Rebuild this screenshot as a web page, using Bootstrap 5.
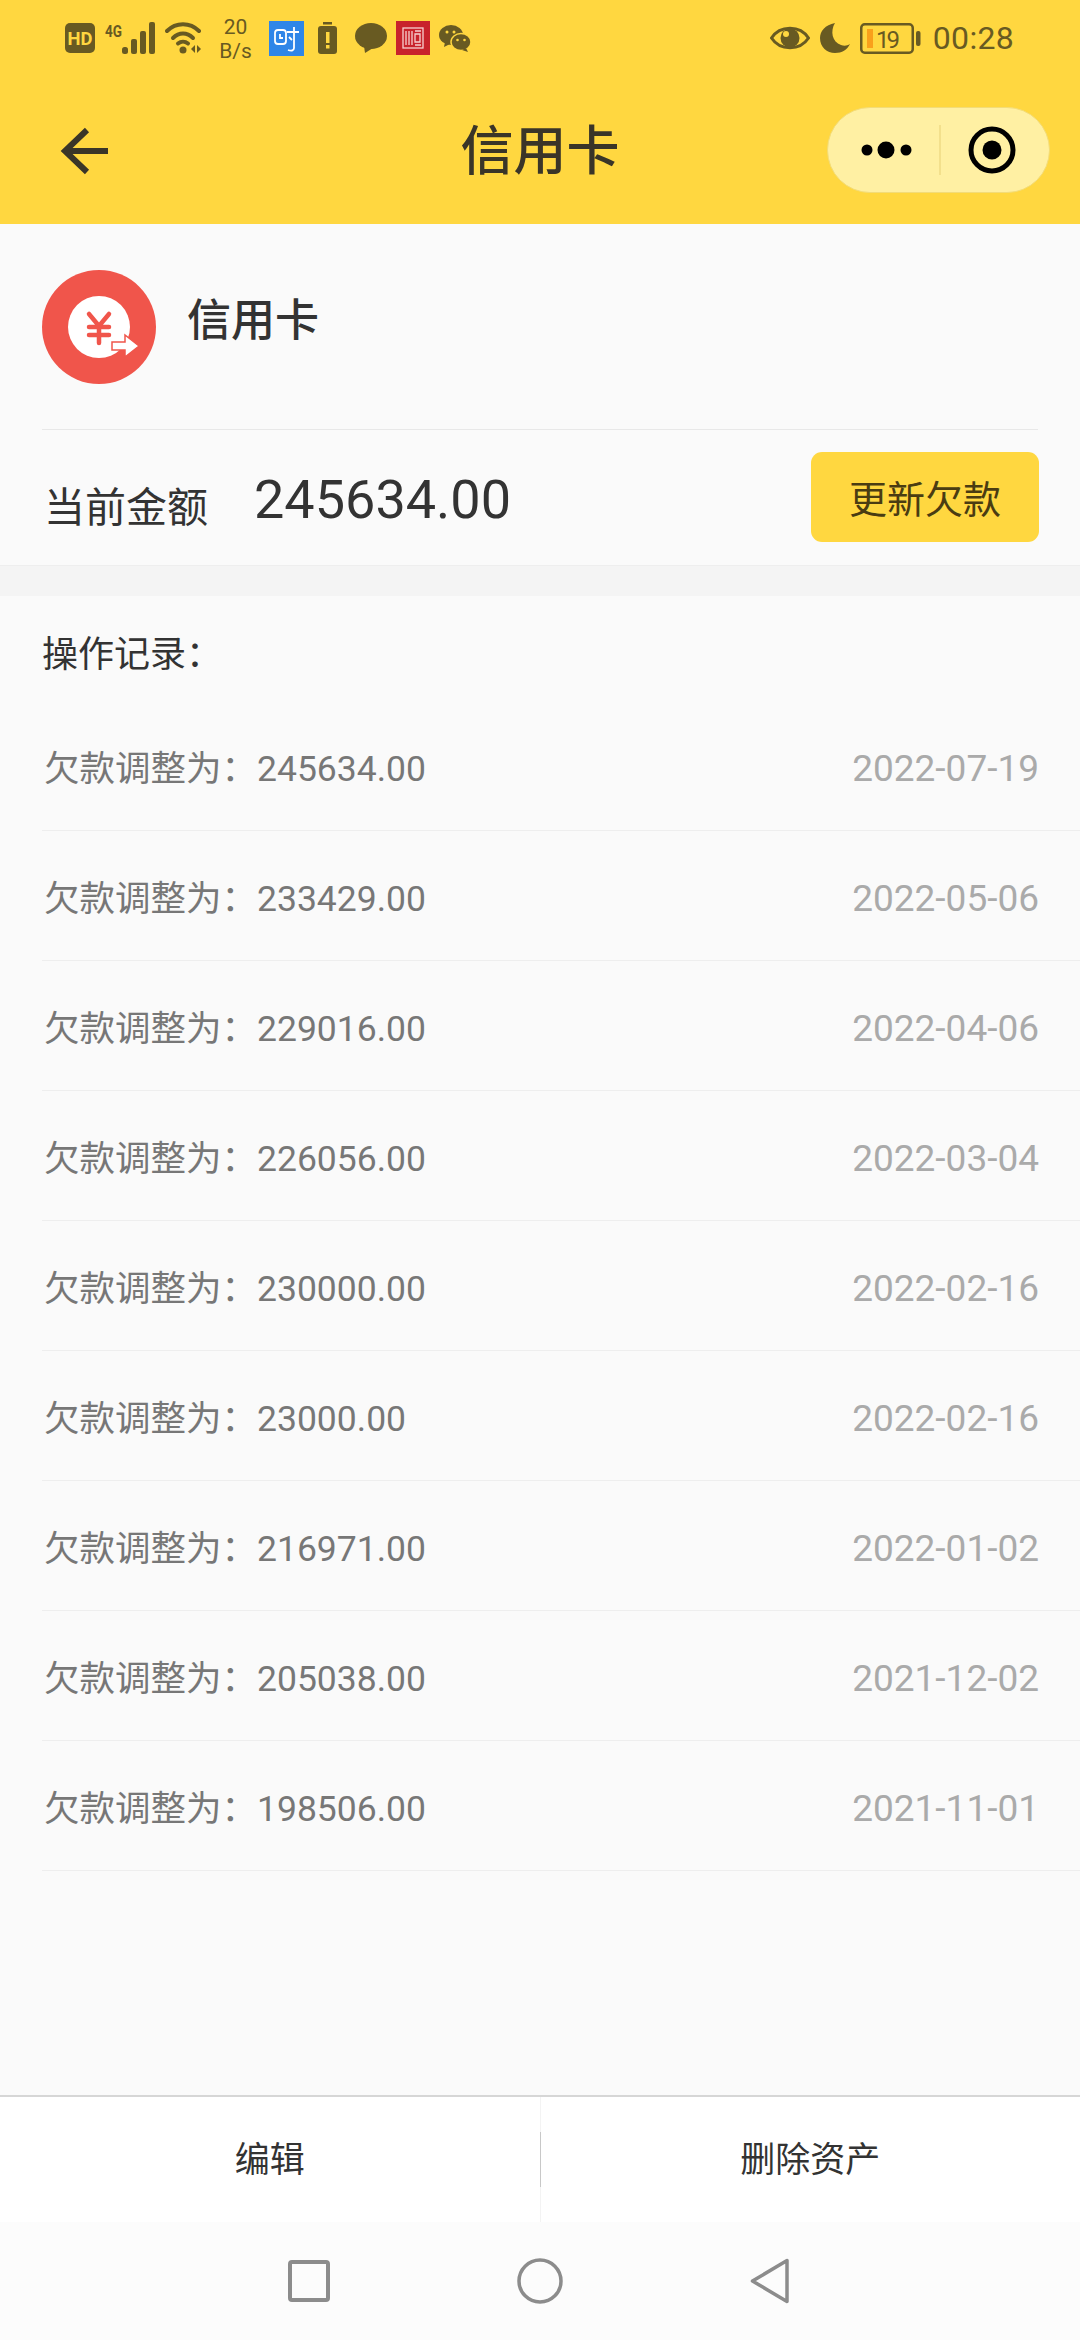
<!DOCTYPE html>
<html lang="zh">
<head>
<meta charset="utf-8">
<title>信用卡</title>
<link href="https://cdn.jsdelivr.net/npm/bootstrap@5.3.0/dist/css/bootstrap.min.css" rel="stylesheet">
<style>
html,body{height:100%}
body{font-family:"Noto Sans CJK SC","Noto Sans",sans-serif;background:#fafafa;color:#333}
.num{font-family:Roboto,"Noto Sans",sans-serif}
.top-area{background:#ffd740;height:224px;flex:none}
.stat-bar{height:76px;padding:0 66px 0 65px;color:#685a22}
.stat-bar svg{display:block;flex:none}
.m8{margin-left:9px}.m10{margin-left:10px}.m14{margin-left:14px}.m17{margin-left:17px}.m18{margin-left:18px}
.speed{font:21px/24px Roboto,sans-serif;width:33px;text-align:center;margin-left:17px;margin-top:1px;white-space:nowrap}
.clock{font:32px/1 Roboto,sans-serif;margin-left:11px;letter-spacing:.3px}
.title-bar{height:148px;padding:0 30px 0 60px;position:relative}
.back-ico{margin-top:51px}
.page-title{position:absolute;left:0;right:0;top:45px;text-align:center;font-size:53px;line-height:52px;color:#3a3528;font-weight:500}
.capsule{width:223px;height:86px;margin-top:31px;border-radius:43px;background:#fff0a3;border:1px solid #f3dc78;position:relative}
.cap-dots{margin-left:33px}
.cap-sep{width:2px;height:50px;background:#f3e08c;margin-left:26px}
.cap-target{margin-left:27px}
.info-head{margin:0 42px;padding:46px 0 45px;border-bottom:1px solid #e8e8e8}
.info-name{font-size:44px;line-height:1;margin:0 0 20px 31px;color:#333;font-weight:500}
.amount-row{height:136px;padding:0 41px 0 44px;border-bottom:1px solid #eee}
.amount-label{font-size:41px;line-height:1;width:210px;margin-top:13px;color:#333}
.amount-val{font-size:54px;line-height:1;color:#333;margin-top:4px}
.btn-debt{width:228px;height:90px;margin-top:-1px;padding:0;background:#ffd740;border:0;border-radius:11px;font-size:38px;color:#4a3c12;line-height:1}
.band{height:30px;background:#f4f4f4}
.log-title{height:105px;padding:37px 0 0 42px;font-size:36px;line-height:36px;color:#333}
.log-row{height:130px;margin-left:42px;padding:5px 41px 0 2px;border-bottom:1px solid #eee}
.log-txt{font-size:35.5px;line-height:1;color:#777;white-space:nowrap}
.log-date{font-size:37px;line-height:1;color:#aaa}
.foot{height:127px;background:#fff;border-top:2px solid #d6d6d6;flex:none;font-size:35px;color:#333}
.foot-cell{flex:1 1 0;padding-bottom:4px}
.foot-sep{width:1px;background:#f3f3f3;position:relative}
.foot-sep::after{content:"";position:absolute;left:0;top:35px;height:55px;width:1px;background:#c8c8c8}
.sys-nav{height:118px;background:#fcfcfc;flex:none;gap:187px;padding:0 3px 0 0}
</style>
</head>
<body class="d-flex flex-column">

<header class="top-area">
  <div class="stat-bar d-flex align-items-center">
    <svg width="30" height="30" viewBox="0 0 30 30"><rect width="30" height="30" rx="5" fill="#685a22"/><text x="15" y="22" text-anchor="middle" font-family="Roboto,sans-serif" font-weight="700" font-size="18" textLength="25" lengthAdjust="spacingAndGlyphs" fill="#ffd740">HD</text></svg>
    <svg class="m10" width="50" height="36" viewBox="0 0 50 36" fill="#685a22"><text x="0" y="17" font-family="Roboto,sans-serif" font-weight="700" font-size="17" textLength="17" lengthAdjust="spacingAndGlyphs">4G</text><rect x="17" y="27" width="6" height="7" rx="2.5"/><rect x="26" y="19" width="6" height="15" rx="2"/><rect x="35" y="11" width="6" height="23" rx="2"/><rect x="44" y="2" width="6" height="32" rx="2"/></svg>
    <svg class="m10" width="37" height="32" viewBox="0 0 37 32" fill="none" stroke="#685a22" stroke-width="4" stroke-linecap="round"><path d="M2 9C11 0 25 0 34 9"/><path d="M8 16C14 10 22 10 28 16"/><circle cx="18" cy="28" r="3.5" fill="#685a22" stroke="none"/><path d="M13 21.500C16 19 20 19 23 21.500"/><path d="M30 23l-4 4 4 4zM32 23l4 4-4 4z" fill="#685a22" stroke="none"/></svg>
    <div class="speed">20<br>B/s</div>
    <svg class="m17" width="35" height="35" viewBox="0 0 35 35"><rect width="35" height="35" fill="#2f86e8"/><g fill="none" stroke="#fff" stroke-width="1.800"><rect x="6" y="9" width="11" height="14" rx="3"/><path d="M11 13v4h3M18 11h12M25 6v21c0 3-3 3-6 2M20 16l3 3"/></g></svg>
    <svg class="m14" width="19" height="32" viewBox="0 0 19 32"><rect x="5" y="0" width="9" height="2.500" fill="#685a22"/><rect y="4" width="19" height="28" rx="3" fill="#685a22"/><rect x="8" y="10" width="3.500" height="11" fill="#ffd740"/><rect x="8" y="23" width="3.500" height="3.500" fill="#ffd740"/></svg>
    <svg class="m18" width="32" height="30" viewBox="0 0 32 30" fill="#685a22"><ellipse cx="16" cy="13" rx="16" ry="13"/><path d="M9 23l1 7 8-5z"/></svg>
    <svg class="m8" width="34" height="34" viewBox="0 0 34 34"><rect width="34" height="34" fill="#c8232c"/><g fill="none" stroke="#f6d0d0" stroke-width="1.300"><rect x="7" y="7" width="20" height="20"/><path d="M10 10v14M13 10v14M16 10v14M19 10h6M19 13h5v8h-5zM19 24h6"/></g></svg>
    <svg class="m8" width="32" height="27" viewBox="0 0 32 27" fill="#685a22"><ellipse cx="12" cy="10" rx="12" ry="10"/><path d="M6 17l-1 5 6-3z"/><ellipse cx="22" cy="17" rx="10" ry="8.500" stroke="#ffd740" stroke-width="1.500"/><path d="M27 23l2 4-6-2z"/><circle cx="8" cy="7" r="1.500" fill="#ffd740"/><circle cx="15" cy="7" r="1.500" fill="#ffd740"/><circle cx="18.500" cy="15" r="1.300" fill="#ffd740"/><circle cx="25.500" cy="15" r="1.300" fill="#ffd740"/></svg>
    <div class="ms-auto d-flex align-items-center">
      <svg width="40" height="26" viewBox="0 0 40 26"><path d="M1.500 13C10 0 30 0 38.500 13 30 26 10 26 1.500 13z" fill="none" stroke="#685a22" stroke-width="3"/><circle cx="20" cy="13" r="9.500" fill="#685a22"/><circle cx="16" cy="9" r="3" fill="#ffd740"/></svg>
      <svg class="m10" width="30" height="30" viewBox="0 0 30 30"><path d="M15 0C5 2 0 8 0 15c0 9 7 15 15 15 7 0 12-3 15-9-3 2-6 2-9 1C12 19 10 8 15 0z" fill="#685a22"/></svg>
      <svg class="m10" width="62" height="31" viewBox="0 0 62 31"><rect x="1.250" y="1.250" width="51.500" height="28.500" rx="3.500" fill="none" stroke="#685a22" stroke-width="2.500"/><rect x="7" y="6" width="6" height="19" fill="#f9a01b"/><text x="16" y="25" font-family="Roboto,sans-serif" font-size="24" fill="#685a22" textLength="24">19</text><rect x="56" y="8" width="4.500" height="15" rx="2" fill="#685a22"/></svg>
      <div class="clock">00:28</div>
    </div>
  </div>
  <div class="title-bar d-flex align-items-start justify-content-between">
    <svg class="back-ico" width="48" height="48" viewBox="0 0 48 48" fill="none" stroke="#3a3528" stroke-width="6"><path d="M48 24H4M27 3L5 24l22 21"/></svg>
    <div class="page-title">信用卡</div>
    <div class="capsule d-flex align-items-center">
      <svg class="cap-dots" width="52" height="18" viewBox="0 0 52 18" fill="#000"><circle cx="6" cy="9" r="5.500"/><circle cx="25" cy="9" r="8.500"/><circle cx="45" cy="9" r="5.500"/></svg>
      <div class="cap-sep"></div>
      <svg class="cap-target" width="48" height="48" viewBox="0 0 48 48"><circle cx="24" cy="24" r="21" fill="none" stroke="#000" stroke-width="5"/><circle cx="24" cy="24" r="9.500" fill="#000"/></svg>
    </div>
  </div>
</header>

<main class="flex-grow-1">
  <section class="info-head d-flex align-items-center">
    <svg width="114" height="114" viewBox="0 0 114 114"><circle cx="57" cy="57" r="57" fill="#f0554b"/><circle cx="57" cy="57" r="31" fill="#fff"/><path d="M47 44l10 12 10-12M47 57h20M47 65h20M57 56v17" fill="none" stroke="#f0554b" stroke-width="4.500" stroke-linecap="round"/><path d="M70 72h13v-7l14 11-14 11v-7H70z" fill="#fff" stroke="#f0554b" stroke-width="1.500"/></svg>
    <div class="info-name">信用卡</div>
  </section>
  <section class="amount-row d-flex align-items-center">
    <div class="amount-label">当前金额</div>
    <div class="amount-val num">245634.00</div>
    <button type="button" class="btn btn-debt ms-auto">更新欠款</button>
  </section>
  <div class="band"></div>
  <div class="log-title">操作记录：</div>
  <div class="log-row d-flex align-items-center justify-content-between"><span class="log-txt">欠款调整为：<span class="num">245634.00</span></span><span class="log-date num">2022-07-19</span></div>
  <div class="log-row d-flex align-items-center justify-content-between"><span class="log-txt">欠款调整为：<span class="num">233429.00</span></span><span class="log-date num">2022-05-06</span></div>
  <div class="log-row d-flex align-items-center justify-content-between"><span class="log-txt">欠款调整为：<span class="num">229016.00</span></span><span class="log-date num">2022-04-06</span></div>
  <div class="log-row d-flex align-items-center justify-content-between"><span class="log-txt">欠款调整为：<span class="num">226056.00</span></span><span class="log-date num">2022-03-04</span></div>
  <div class="log-row d-flex align-items-center justify-content-between"><span class="log-txt">欠款调整为：<span class="num">230000.00</span></span><span class="log-date num">2022-02-16</span></div>
  <div class="log-row d-flex align-items-center justify-content-between"><span class="log-txt">欠款调整为：<span class="num">23000.00</span></span><span class="log-date num">2022-02-16</span></div>
  <div class="log-row d-flex align-items-center justify-content-between"><span class="log-txt">欠款调整为：<span class="num">216971.00</span></span><span class="log-date num">2022-01-02</span></div>
  <div class="log-row d-flex align-items-center justify-content-between"><span class="log-txt">欠款调整为：<span class="num">205038.00</span></span><span class="log-date num">2021-12-02</span></div>
  <div class="log-row d-flex align-items-center justify-content-between"><span class="log-txt">欠款调整为：<span class="num">198506.00</span></span><span class="log-date num">2021-11-01</span></div>
</main>

<footer class="foot d-flex">
  <div class="foot-cell d-flex align-items-center justify-content-center">编辑</div>
  <div class="foot-sep"></div>
  <div class="foot-cell d-flex align-items-center justify-content-center">删除资产</div>
</footer>
<nav class="sys-nav d-flex align-items-center justify-content-center">
  <svg width="42" height="42" viewBox="0 0 42 42"><rect x="2" y="2" width="38" height="38" rx="2" fill="none" stroke="#8c8c8c" stroke-width="4"/></svg>
  <svg width="46" height="46" viewBox="0 0 46 46"><circle cx="23" cy="23" r="21" fill="none" stroke="#8c8c8c" stroke-width="3.500"/></svg>
  <svg width="39" height="46" viewBox="0 0 39 46"><path d="M37 2.500v41L2.500 23z" fill="none" stroke="#8c8c8c" stroke-width="3.500" stroke-linejoin="round"/></svg>
</nav>
</body>
</html>
